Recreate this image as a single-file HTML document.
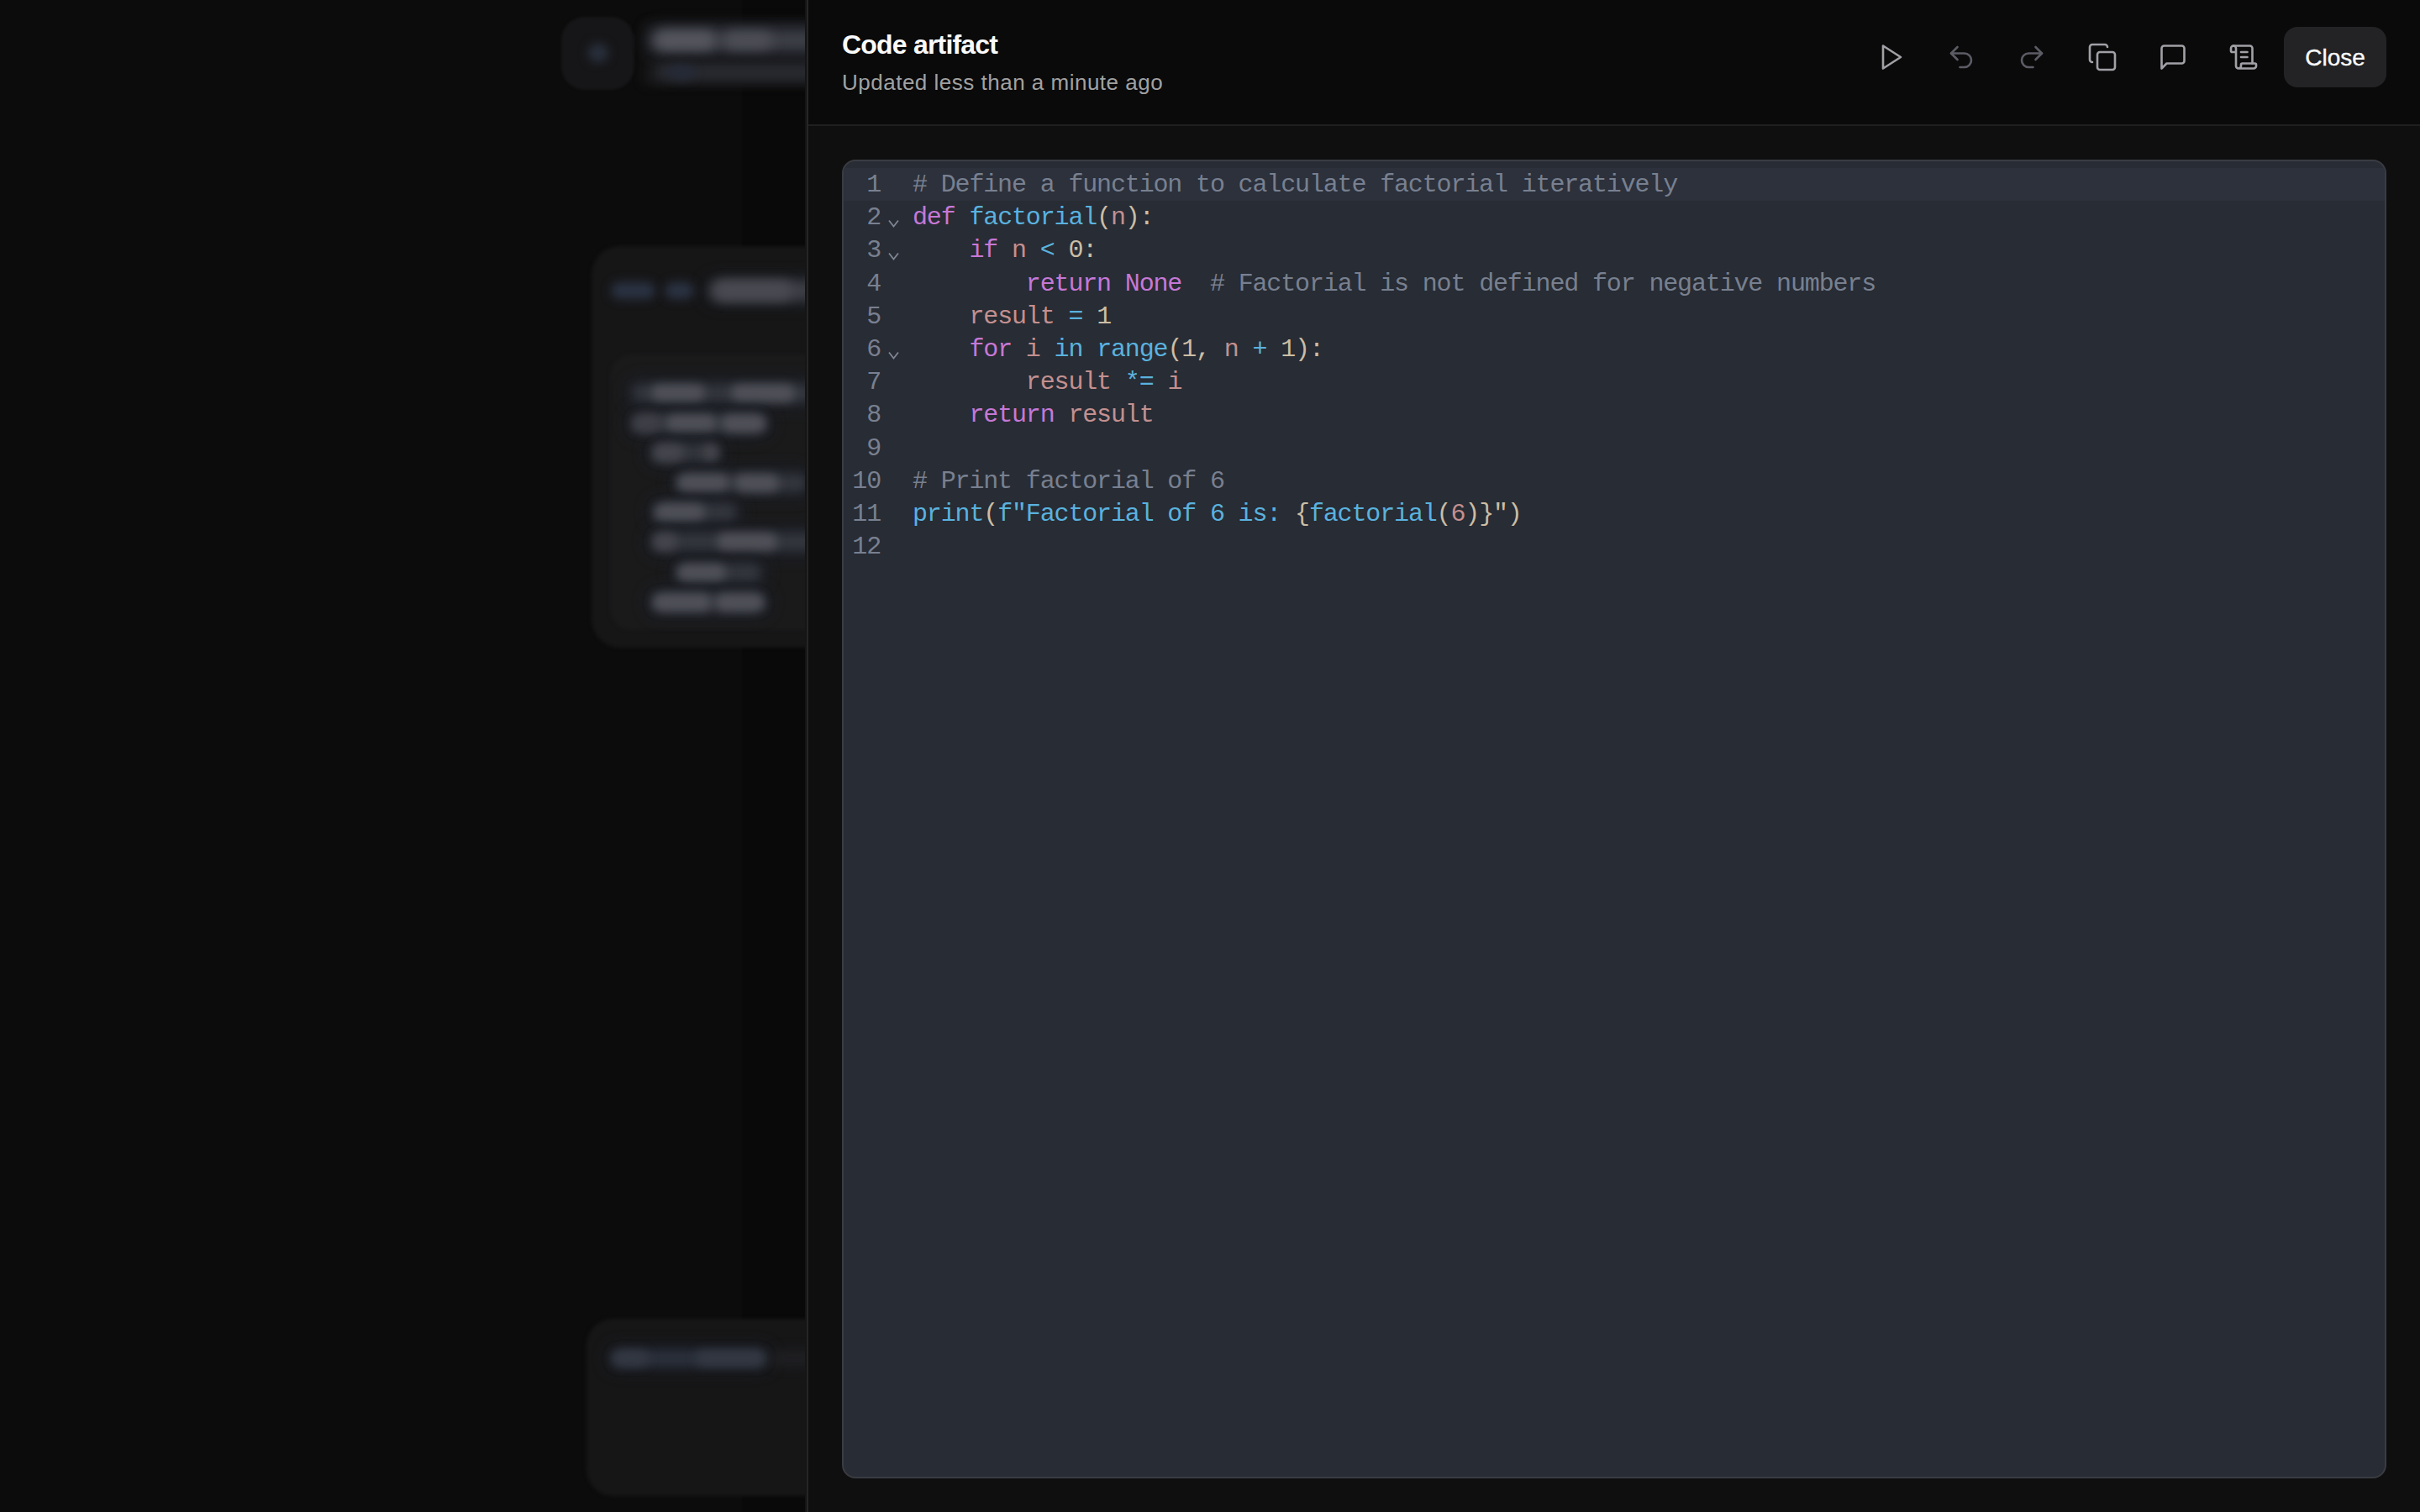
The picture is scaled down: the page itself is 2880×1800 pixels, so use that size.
<!DOCTYPE html>
<html>
<head>
<meta charset="utf-8">
<style>
html,body{margin:0;padding:0;}
body{width:2880px;height:1800px;overflow:hidden;position:relative;background:#0c0c0c;font-family:"Liberation Sans",sans-serif;}
.abs{position:absolute;}
/* left blurred background */
#bg{position:absolute;left:0;top:0;width:960px;height:1800px;overflow:hidden;background:#0c0c0c;}
.blob{position:absolute;border-radius:999px;filter:blur(7px);}
#shade{position:absolute;left:882px;top:0;width:78px;height:1800px;background:#0a0a0a;}
/* panel */
#panel{position:absolute;left:960px;top:0;width:1920px;height:1800px;background:#0f0f0f;border-left:2px solid #262626;box-sizing:border-box;}
#hdr{position:absolute;left:0;top:0;width:1918px;height:148px;background:#0a0a0a;border-bottom:2px solid #1f1f1f;}
#title{position:absolute;left:40px;top:33px;font-size:32px;font-weight:700;color:#fafafa;letter-spacing:-0.8px;white-space:nowrap;line-height:40px;}
#sub{position:absolute;left:40px;top:80px;font-size:26px;color:#a1a1a1;letter-spacing:0.5px;white-space:nowrap;line-height:36px;}
.ico{position:absolute;top:50px;width:36px;height:36px;}
.ico svg{width:36px;height:36px;display:block;}
#close{position:absolute;left:1756px;top:32px;width:122px;height:72px;border-radius:16px;background:#232325;color:#fafafa;font-size:28px;line-height:74px;text-align:center;-webkit-text-stroke:0.35px #fafafa;}
/* editor */
#ed{position:absolute;left:40px;top:190px;width:1838px;height:1570px;box-sizing:border-box;border:2px solid #3a3c42;border-radius:16px;background:#282c34;overflow:hidden;}
#lines{position:absolute;left:0;top:8px;width:100%;}
.ln{position:relative;height:39.2px;}
.ln.act{background:#2c313c;}
.ln.act .g{background:#2d313b;}
.g{position:absolute;left:0;top:0;width:70px;height:39.2px;}
.num{position:absolute;right:26px;top:1px;font-family:"Liberation Mono",monospace;font-size:30px;letter-spacing:-1.15px;line-height:39.2px;color:#798090;}
.fold{position:absolute;left:53px;top:22px;width:13px;height:10px;}
.code{position:absolute;left:82px;top:1px;font-family:"Liberation Mono",monospace;font-size:30px;letter-spacing:-1.15px;line-height:39.2px;white-space:pre;color:#abb2bf;}
.c{color:#788090;}
.k{color:#c678d6;}
.f{color:#5ab2df;}
.v{color:#c39090;}
.p{color:#cbbda6;}
@media (max-width:2000px){html{zoom:0.5;}}
</style>
</head>
<body>
<div id="bg">
  <div class="abs" style="left:883px;top:0;width:77px;height:1800px;background:#090909;"></div>
  <div class="abs" style="left:668px;top:20px;width:87px;height:87px;border-radius:28px;background:#161618;filter:blur(1.5px);"></div>
  <div class="blob" style="left:700px;top:52px;width:24px;height:22px;background:#29303d;filter:blur(6px);"></div>
  <div class="abs" style="left:762px;top:24px;width:220px;height:80px;border-radius:10px;background:#141415;filter:blur(4px);"></div>
  <div class="blob" style="left:768px;top:29px;width:215px;height:38px;background:#23262e;filter:blur(8px);"></div>
  <div class="blob" style="left:776px;top:38px;width:199px;height:20px;background:#3f4047;filter:blur(7px);"></div>
  <div class="blob" style="left:780px;top:37px;width:71px;height:22px;background:#55565e;filter:blur(7px);"></div>
  <div class="blob" style="left:862px;top:38px;width:57px;height:20px;background:#4d4e56;filter:blur(7px);"></div>
  <div class="blob" style="left:778px;top:76px;width:197px;height:20px;background:#2a2c33;filter:blur(7px);"></div>
  <div class="blob" style="left:796px;top:78px;width:30px;height:16px;background:#252a38;filter:blur(6px);"></div>
  <div class="abs" style="left:704px;top:293px;width:330px;height:478px;border-radius:34px;background:#161617;filter:blur(2px);"></div>
  <div class="blob" style="left:727px;top:336px;width:53px;height:20px;background:#2a3242;filter:blur(6px);"></div>
  <div class="blob" style="left:791px;top:336px;width:35px;height:20px;background:#2a3242;filter:blur(6px);"></div>
  <div class="blob" style="left:838px;top:329px;width:145px;height:34px;background:#1f2229;filter:blur(8px);"></div>
  <div class="blob" style="left:846px;top:335px;width:129px;height:22px;background:#3f4047;filter:blur(7px);"></div>
  <div class="blob" style="left:850px;top:335px;width:92px;height:22px;background:#4a4b52;filter:blur(7px);"></div>
  <div class="abs" style="left:726px;top:422px;width:310px;height:328px;border-radius:26px;background:#1a1a1b;filter:blur(2px);"></div>
  <div class="blob" style="left:745px;top:450px;width:238px;height:36px;background:#1e2129;filter:blur(8px);"></div>
  <div class="blob" style="left:753px;top:458px;width:222px;height:20px;background:#34363d;filter:blur(6px);"></div>
  <div class="blob" style="left:775px;top:458px;width:64px;height:20px;background:#505159;filter:blur(6px);"></div>
  <div class="blob" style="left:870px;top:458px;width:76px;height:20px;background:#505159;filter:blur(6px);"></div>
  <div class="blob" style="left:745px;top:486px;width:174px;height:36px;background:#1e2129;filter:blur(8px);"></div>
  <div class="blob" style="left:753px;top:494px;width:158px;height:20px;background:#34363d;filter:blur(6px);"></div>
  <div class="blob" style="left:753px;top:494px;width:35px;height:20px;background:#3f4047;filter:blur(6px);"></div>
  <div class="blob" style="left:792px;top:494px;width:61px;height:20px;background:#505159;filter:blur(6px);"></div>
  <div class="blob" style="left:858px;top:494px;width:53px;height:20px;background:#505159;filter:blur(6px);"></div>
  <div class="blob" style="left:769px;top:521px;width:94px;height:36px;background:#1e2129;filter:blur(8px);"></div>
  <div class="blob" style="left:777px;top:529px;width:78px;height:20px;background:#34363d;filter:blur(6px);"></div>
  <div class="blob" style="left:777px;top:529px;width:37px;height:20px;background:#45464d;filter:blur(6px);"></div>
  <div class="blob" style="left:837px;top:529px;width:18px;height:20px;background:#45464d;filter:blur(6px);"></div>
  <div class="blob" style="left:798px;top:557px;width:170px;height:36px;background:#1e2129;filter:blur(8px);"></div>
  <div class="blob" style="left:806px;top:565px;width:154px;height:20px;background:#34363d;filter:blur(6px);"></div>
  <div class="blob" style="left:806px;top:565px;width:62px;height:20px;background:#505159;filter:blur(6px);"></div>
  <div class="blob" style="left:874px;top:565px;width:53px;height:20px;background:#505159;filter:blur(6px);"></div>
  <div class="blob" style="left:771px;top:592px;width:113px;height:36px;background:#1e2129;filter:blur(8px);"></div>
  <div class="blob" style="left:779px;top:600px;width:97px;height:20px;background:#34363d;filter:blur(6px);"></div>
  <div class="blob" style="left:779px;top:600px;width:60px;height:20px;background:#505159;filter:blur(6px);"></div>
  <div class="blob" style="left:769px;top:627px;width:214px;height:36px;background:#1e2129;filter:blur(8px);"></div>
  <div class="blob" style="left:777px;top:635px;width:198px;height:20px;background:#34363d;filter:blur(6px);"></div>
  <div class="blob" style="left:777px;top:635px;width:29px;height:20px;background:#45464d;filter:blur(6px);"></div>
  <div class="blob" style="left:853px;top:635px;width:72px;height:20px;background:#505159;filter:blur(6px);"></div>
  <div class="blob" style="left:798px;top:664px;width:115px;height:36px;background:#1e2129;filter:blur(8px);"></div>
  <div class="blob" style="left:806px;top:672px;width:99px;height:20px;background:#34363d;filter:blur(6px);"></div>
  <div class="blob" style="left:806px;top:672px;width:58px;height:20px;background:#505159;filter:blur(6px);"></div>
  <div class="blob" style="left:769px;top:699px;width:148px;height:36px;background:#1e2129;filter:blur(8px);"></div>
  <div class="blob" style="left:777px;top:707px;width:132px;height:20px;background:#34363d;filter:blur(6px);"></div>
  <div class="blob" style="left:777px;top:707px;width:70px;height:20px;background:#505159;filter:blur(6px);"></div>
  <div class="blob" style="left:851px;top:707px;width:58px;height:20px;background:#505159;filter:blur(6px);"></div>
  <div class="abs" style="left:698px;top:1570px;width:330px;height:211px;border-radius:32px;background:#161617;filter:blur(2px);"></div>
  <div class="blob" style="left:721px;top:1601px;width:198px;height:32px;background:#1b1e25;filter:blur(8px);"></div>
  <div class="blob" style="left:729px;top:1608px;width:182px;height:18px;background:#2b303b;filter:blur(6px);"></div>
  <div class="blob" style="left:729px;top:1608px;width:43px;height:18px;background:#333842;filter:blur(6px);"></div>
  <div class="blob" style="left:828px;top:1608px;width:83px;height:18px;background:#333842;filter:blur(6px);"></div>
  <div class="blob" style="left:917px;top:1608px;width:58px;height:18px;background:#1f2023;filter:blur(7px);"></div>
</div>
<div class="abs" style="left:958px;top:0;width:2px;height:1800px;background:#151515;"></div>

<div id="panel">
  <div id="hdr">
    <div id="title">Code artifact</div>
    <div id="sub">Updated less than a minute ago</div>

    <div class="ico" style="left:1270px"><svg viewBox="0 0 24 24" fill="none" stroke="#a0a0a6" stroke-width="1.75" stroke-linecap="round" stroke-linejoin="round"><polygon points="6 3 20 12 6 21 6 3"/></svg></div>
    <div class="ico" style="left:1354px"><svg viewBox="0 0 24 24" fill="none" stroke="#5c5c66" stroke-width="1.75" stroke-linecap="round" stroke-linejoin="round"><path d="M9 14 4 9l5-5"/><path d="M4 9h10.5a5.5 5.5 0 0 1 5.5 5.5a5.5 5.5 0 0 1-5.5 5.5H11"/></svg></div>
    <div class="ico" style="left:1438px"><svg viewBox="0 0 24 24" fill="none" stroke="#5c5c66" stroke-width="1.75" stroke-linecap="round" stroke-linejoin="round"><path d="m15 14 5-5-5-5"/><path d="M20 9H9.5A5.5 5.5 0 0 0 4 14.5A5.5 5.5 0 0 0 9.5 20H13"/></svg></div>
    <div class="ico" style="left:1522px"><svg viewBox="0 0 24 24" fill="none" stroke="#a0a0a6" stroke-width="1.75" stroke-linecap="round" stroke-linejoin="round"><rect width="14" height="14" x="8" y="8" rx="2" ry="2"/><path d="M4 16c-1.1 0-2-.9-2-2V4c0-1.1.9-2 2-2h10c1.1 0 2 .9 2 2"/></svg></div>
    <div class="ico" style="left:1606px"><svg viewBox="0 0 24 24" fill="none" stroke="#a0a0a6" stroke-width="1.75" stroke-linecap="round" stroke-linejoin="round"><path d="M21 15a2 2 0 0 1-2 2H7l-4 4V5a2 2 0 0 1 2-2h14a2 2 0 0 1 2 2z"/></svg></div>
    <div class="ico" style="left:1690px"><svg viewBox="0 0 24 24" fill="none" stroke="#a0a0a6" stroke-width="1.75" stroke-linecap="round" stroke-linejoin="round"><path d="M15 12h-5"/><path d="M15 8h-5"/><path d="M19 17V5a2 2 0 0 0-2-2H4"/><path d="M8 21h12a2 2 0 0 0 2-2v-1a1 1 0 0 0-1-1H11a1 1 0 0 0-1 1v1a2 2 0 1 1-4 0V5a2 2 0 1 0-4 0v2a1 1 0 0 0 1 1h3"/></svg></div>
    <div id="close">Close</div>
  </div>
  <div id="ed">
    <div id="lines">
      <div class="ln act"><div class="g"><span class="num">1</span></div><div class="code"><span class="c"># Define a function to calculate factorial iteratively</span></div></div>
      <div class="ln"><div class="g"><span class="num">2</span><svg class="fold" viewBox="0 0 13 10"><path d="M1 1.5 6.5 8.5 12 1.5" fill="none" stroke="#7e8592" stroke-width="1.8"/></svg></div><div class="code"><span class="k">def</span> <span class="f">factorial</span><span class="p">(</span><span class="v">n</span><span class="p">):</span></div></div>
      <div class="ln"><div class="g"><span class="num">3</span><svg class="fold" viewBox="0 0 13 10"><path d="M1 1.5 6.5 8.5 12 1.5" fill="none" stroke="#7e8592" stroke-width="1.8"/></svg></div><div class="code">    <span class="k">if</span> <span class="v">n</span> <span class="f">&lt;</span> <span class="p">0:</span></div></div>
      <div class="ln"><div class="g"><span class="num">4</span></div><div class="code">        <span class="k">return</span> <span class="k">None</span>  <span class="c"># Factorial is not defined for negative numbers</span></div></div>
      <div class="ln"><div class="g"><span class="num">5</span></div><div class="code">    <span class="v">result</span> <span class="f">=</span> <span class="p">1</span></div></div>
      <div class="ln"><div class="g"><span class="num">6</span><svg class="fold" viewBox="0 0 13 10"><path d="M1 1.5 6.5 8.5 12 1.5" fill="none" stroke="#7e8592" stroke-width="1.8"/></svg></div><div class="code">    <span class="k">for</span> <span class="v">i</span> <span class="f">in</span> <span class="f">range</span><span class="p">(1,</span> <span class="v">n</span> <span class="f">+</span> <span class="p">1):</span></div></div>
      <div class="ln"><div class="g"><span class="num">7</span></div><div class="code">        <span class="v">result</span> <span class="f">*=</span> <span class="v">i</span></div></div>
      <div class="ln"><div class="g"><span class="num">8</span></div><div class="code">    <span class="k">return</span> <span class="v">result</span></div></div>
      <div class="ln"><div class="g"><span class="num">9</span></div><div class="code"></div></div>
      <div class="ln"><div class="g"><span class="num">10</span></div><div class="code"><span class="c"># Print factorial of 6</span></div></div>
      <div class="ln"><div class="g"><span class="num">11</span></div><div class="code"><span class="f">print</span><span class="p">(</span><span class="f">f"Factorial of 6 is: </span><span class="p">{</span><span class="f">factorial</span><span class="p">(</span><span class="v">6</span><span class="p">)}")</span></div></div>
      <div class="ln"><div class="g"><span class="num">12</span></div><div class="code"></div></div>
    </div>
  </div>
</div>
</body>
</html>
